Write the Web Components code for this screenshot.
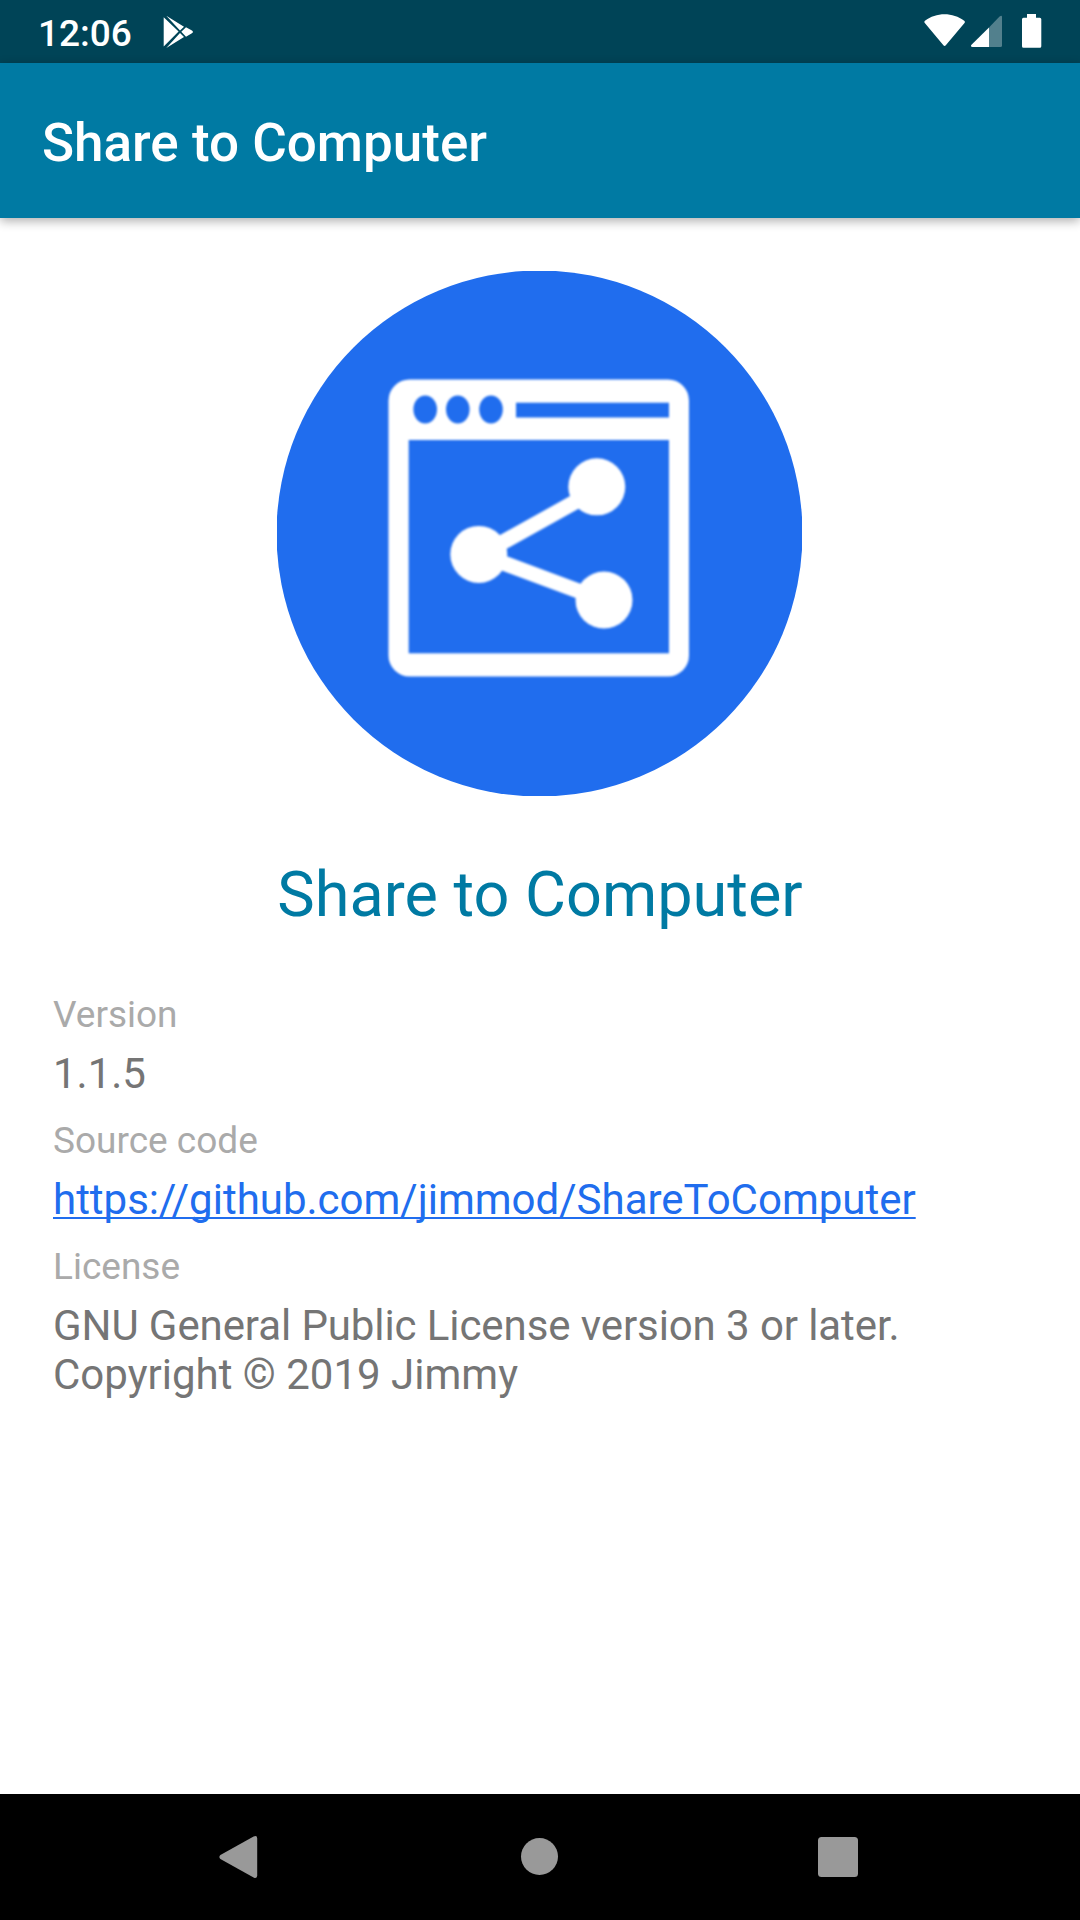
<!DOCTYPE html>
<html lang="en">
<head>
<meta charset="utf-8">
<title>Share to Computer</title>
<style>
html,body{margin:0;padding:0;background:#fff}
body{width:1080px;height:1920px;overflow:hidden;font-family:Roboto,"Noto Sans",sans-serif}
</style>
</head>
<body>
<about-screen></about-screen>
<script>
const define = (name, html) => customElements.define(name, class extends HTMLElement {
  constructor() {
    super();
    this.attachShadow({mode: 'open'}).innerHTML = html;
  }
});

define('status-bar', `
<style>
:host{display:flex;align-items:center;justify-content:space-between;height:63px;background:#004457;color:#fff;padding:0 38px 0 38px;box-sizing:border-box}
.side{display:flex;align-items:center}
.time{font-size:37px;line-height:43px;font-weight:500;width:125px;padding-top:3px}
svg{display:block}
</style>
<div class="side"><span class="time">12:06</span>
<svg width="32" height="63" viewBox="163 0 32 63" fill="#fff"><path d="M163.7 17.2 178.6 31.6 163.7 46.4zM166.3 15.8 184 26.8 180 30.6zM166.3 48 184 37 180 33zM181.3 31.8 186 27.2 191.5 30.3Q194.4 31.9 191.5 33.6L186 36.7z"/></svg></div>
<div class="side"><svg width="118" height="63" viewBox="924 0 118 63" fill="#fff"><path d="M924.8 22.9Q923.8 21.8 925 20.8C936 12 953 12 964.2 20.8Q965.4 21.8 964.5 22.9L945.8 45.2Q944.6 46.6 943.4 45.2z"/><path opacity=".32" d="M989 27.5 999.3 16.7Q1002 14.5 1002 17V45.5Q1002 47 1000.5 47H989z"/><path d="M989 27.5V47H972.5Q970 46.6 971.5 44.7z"/><path d="M1027 14H1036V17.8H1039.8Q1041.3 17.8 1041.3 19.3V46.3Q1041.3 47.8 1039.8 47.8H1023.5Q1022 47.8 1022 46.3V19.3Q1022 17.8 1023.5 17.8H1027z"/></svg></div>`);

define('app-bar', `
<style>
:host{display:flex;align-items:center;height:155px;box-sizing:border-box;padding:5px 42px 0;background:#007aa3;color:#fff;box-shadow:0 3px 10px rgba(0,0,0,.32);position:relative}
h1{margin:0;font-size:53px;line-height:62px;font-weight:500;white-space:nowrap}
</style><h1><slot></slot></h1>`);

define('app-logo', `
<style>:host{display:block;width:525px;height:525px}svg{display:block}.glyph{filter:blur(.9px)}</style>
<svg width="525" height="525" viewBox="277 271 525 525">
<circle cx="539.5" cy="533.5" r="263" fill="#206dee"/>
<g class="glyph">
<rect x="388.5" y="379.5" width="300.5" height="297" rx="21" fill="#fff"/>
<g fill="#206dee"><rect x="408.7" y="440" width="260.3" height="213.3"/><rect x="516" y="402.7" width="153" height="14.8"/>
<ellipse cx="425.2" cy="409.5" rx="11.8" ry="14"/><ellipse cx="457.8" cy="409.5" rx="11.8" ry="14"/><ellipse cx="491" cy="409.5" rx="11.8" ry="14"/></g>
<g fill="#fff"><circle cx="596.8" cy="486.8" r="28.5"/><circle cx="478.8" cy="554.4" r="28.5"/><circle cx="604" cy="600" r="28.5"/></g>
<path d="M479 555.4 596.7 490M479 554 604 600.5" stroke="#fff" stroke-width="15.2"/>
</g>
</svg>`);

define('info-item', `
<style>
:host{display:flex;flex-direction:column;gap:13px}
.label{font-size:37px;line-height:43px;color:#aaa}
.value{font-size:42px;line-height:49px;color:#757575}
::slotted(a){color:#206dee;text-decoration:underline;text-decoration-thickness:2px;text-underline-offset:3px;text-decoration-skip-ink:none}
</style>
<div class="label"><slot name="label"></slot></div><div class="value"><slot></slot></div>`);

define('nav-bar', `
<style>
:host{display:flex;height:126px;background:#000;justify-content:center}svg{display:block}
</style>
<svg width="720" height="126" viewBox="180 1794 720 126" fill="#999"><path d="M220.4 1859Q218.4 1857 220.4 1855L253.6 1836.6Q257.2 1835 257.2 1838.5V1875.5Q257.2 1879 253.6 1877.4z"/><circle cx="539.5" cy="1856.5" r="18.5"/><rect x="818" y="1837" width="40" height="40" rx="3.5"/></svg>`);

define('about-screen', `
<style>
:host{display:flex;flex-direction:column;width:1080px;height:1920px;background:#fff}
main{flex:1;display:flex;flex-direction:column;padding:53px 53px 0}
app-logo{margin-left:224px}
h2{margin:62px 0 0;font-size:63px;line-height:74px;font-weight:400;color:#007aa3;text-align:center}
.list{display:flex;flex-direction:column;gap:21px;margin-top:61px}
.license{letter-spacing:-.09px}
</style>
<status-bar></status-bar>
<app-bar>Share to Computer</app-bar>
<main>
<app-logo></app-logo>
<h2>Share to Computer</h2>
<div class="list">
<info-item><span slot="label">Version</span>1.1.5</info-item>
<info-item><span slot="label">Source code</span><a href="https://github.com/jimmod/ShareToComputer">https://github.com/jimmod/ShareToComputer</a></info-item>
<info-item><span slot="label">License</span><span class="license">GNU General Public License version 3 or later.</span><br>Copyright © 2019 Jimmy</info-item>
</div>
</main>
<nav-bar></nav-bar>`);
</script>
</body>
</html>
